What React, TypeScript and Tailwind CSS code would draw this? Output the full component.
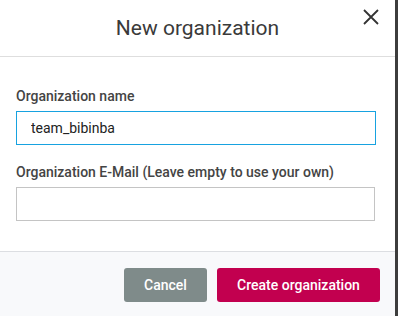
import React, { useState } from 'react';

const App: React.FC = () => {
  const [name, setName] = useState('team_bibinba');
  const [email, setEmail] = useState('');

  return (
    <div className="flex h-[316px] w-[398px] bg-[#3d3d3d]" style={{ fontFamily: 'Roboto, "Liberation Sans", sans-serif' }}>
      <div className="flex w-[395px] flex-col bg-white">
        {/* Header */}
        <div className="relative flex h-[57px] items-center justify-center border-b border-[#dedede]">
          <h2 className="pt-[1px] text-[21px] font-normal text-[#3a3a3a]">New organization</h2>
          <button className="absolute right-[15px] top-[8px] text-[#333]" aria-label="Close">
            <svg width="18" height="18" viewBox="0 0 18 18" fill="none" stroke="currentColor" strokeWidth="1.8">
              <path d="M2 2L16 16M16 2L2 16" />
            </svg>
          </button>
        </div>

        {/* Body */}
        <div className="flex flex-col px-4 pt-[31px]">
          <label className="mb-[7px] text-[14px] font-medium leading-[16px] text-[#444]">Organization name</label>
          <input
            value={name}
            onChange={(e) => setName(e.target.value)}
            className="h-[34px] w-[360px] border border-[#17a2e0] px-[14px] text-[14px] text-[#222] outline-none"
          />
          <label className="mb-[7px] mt-[19px] text-[14px] font-medium leading-[16px] text-[#444]">
            Organization E-Mail (Leave empty to use your own)
          </label>
          <input
            value={email}
            onChange={(e) => setEmail(e.target.value)}
            className="h-[34px] w-[359px] border border-[#c4c4c4] px-[14px] text-[14px] text-[#222] outline-none"
          />
        </div>

        {/* Footer */}
        <div className="mt-auto flex h-[65px] items-start justify-end gap-[10px] border-t border-[#dcdee2] bg-[#f8f9fb] pr-[15px] pt-[16px]">
          <button className="h-[34px] w-[83px] rounded-[3px] bg-[#7f8b8a] text-[14px] font-medium text-white">Cancel</button>
          <button className="h-[34px] w-[163px] rounded-[3px] bg-[#c2004f] text-[14px] font-medium text-white">
            Create organization
          </button>
        </div>
      </div>
    </div>
  );
};

export default App;
